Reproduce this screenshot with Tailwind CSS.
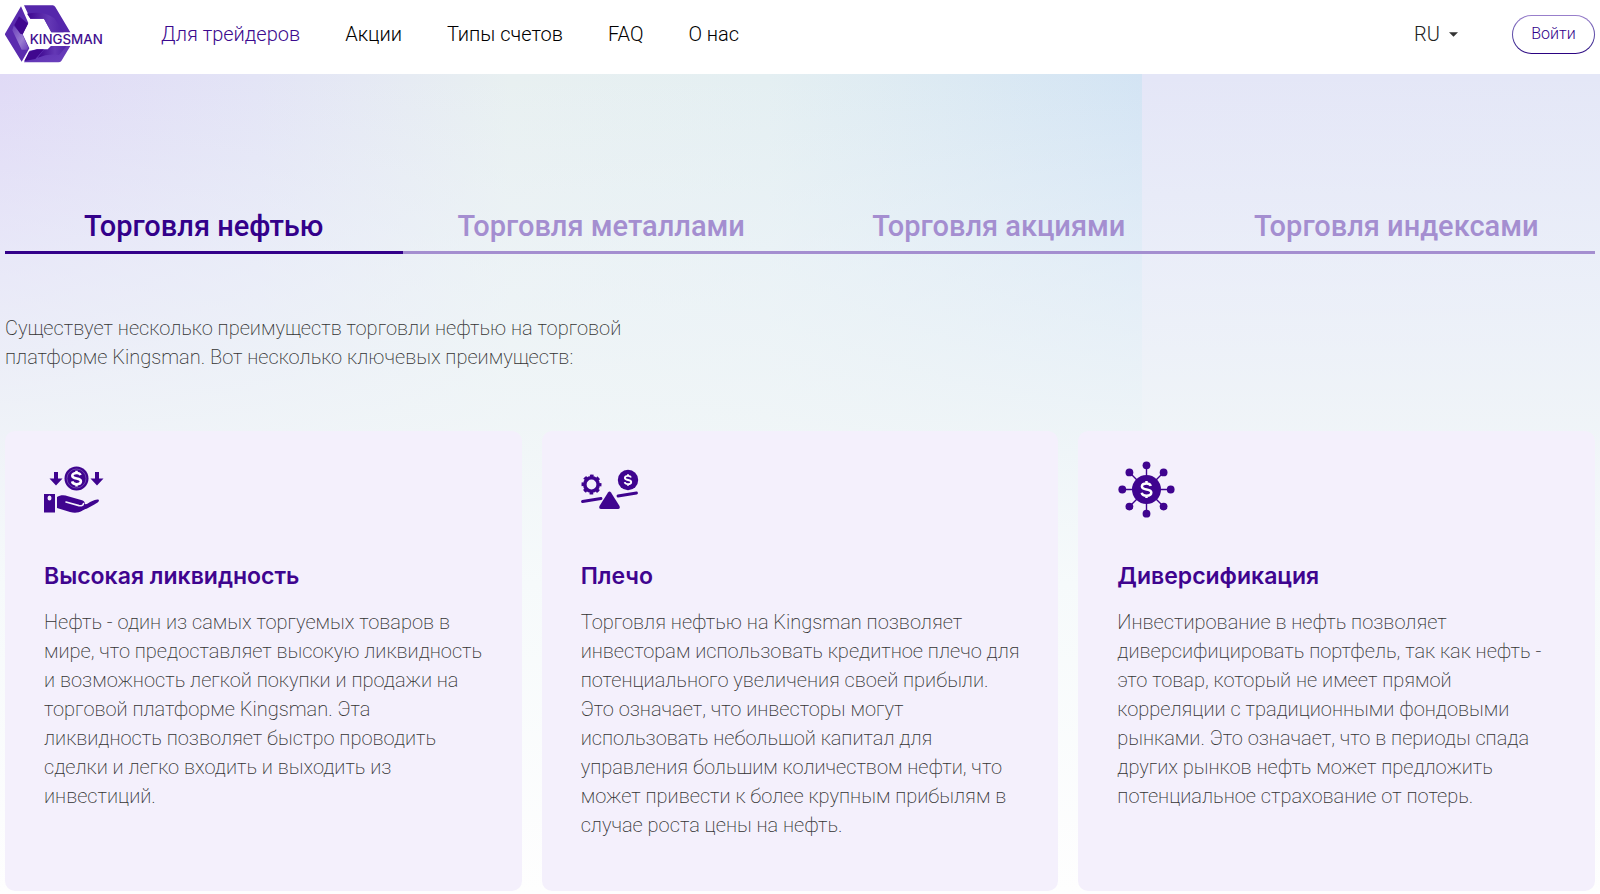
<!DOCTYPE html>
<html lang="ru">
<head>
<meta charset="utf-8">
<meta name="viewport" content="width=device-width, initial-scale=1">
<title>Kingsman</title>
<script src="https://cdn.jsdelivr.net/npm/@tailwindcss/browser@4"></script>
</head>
<body class="flex min-h-screen flex-col bg-white font-['Roboto',sans-serif] text-[#333]">

<header class="flex h-[74px] items-center bg-white px-[5px] pb-[6px]">
  <a href="#" aria-label="Kingsman" class="shrink-0 pt-[2px]">
    <svg class="h-[60px] w-[100px]" viewBox="0 0 300 180">
      <defs>
        <linearGradient id="lg1" x1="0" y1="0" x2="1" y2="1"><stop offset="0" stop-color="#5a2bb0"/><stop offset="1" stop-color="#6c42bd"/></linearGradient>
        <linearGradient id="lg2" x1="0" y1="0" x2="1" y2="0"><stop offset="0" stop-color="#3d068f"/><stop offset=".6" stop-color="#6438b5"/><stop offset="1" stop-color="#4f22a6"/></linearGradient>
        <linearGradient id="lg3" x1="0" y1="0" x2="1" y2="1"><stop offset="0" stop-color="#6a3fba"/><stop offset=".6" stop-color="#9a7dd2"/><stop offset="1" stop-color="#6a3fba"/></linearGradient>
      </defs>
      <path d="M48 4 L-1 88 L50 170 L73 130 L53 88 L70 54Z" fill="#5a2bae"/>
      <path d="M26 62 L22 76 L50 134 L66 134 L70 128 L53 90 L46 84Z" fill="url(#lg3)"/>
      <path d="M42 34 L28 60 L46 86 L53 88 L69 56Z" fill="#40078f"/>
      <path d="M57 1 H143 Q148 1 151 6 L196 82 H139 L117 41 H76Z" fill="#5527ab"/>
      <path d="M76 41 L66 26 Q118 16 148 40 L176 82 H139 L117 41Z" fill="url(#lg2)"/>
      <path d="M96 133 H128 L138 123 H196 L169 168 Q166 172 160 172 H57 L74 137Z" fill="url(#lg1)"/>
      <path d="M72 140 L96 133 H117 L91 162 L58 168Z" fill="#40078f"/>
      <path d="M117 134 H129 L138 124 H184 L162 150 Q132 144 98 158Z" fill="url(#lg2)"/>
      <text x="74" y="117" font-family="Inter, sans-serif" font-size="40" font-weight="500" fill="#42108f">KINGSMAN</text>
    </svg>
  </a>
  <nav class="ml-14 flex flex-1 items-center gap-[45px] text-[20px] leading-6 font-light text-black">
    <a href="#" class="text-[#3c0a8e]">Для трейдеров</a>
    <a href="#">Акции</a>
    <a href="#">Типы счетов</a>
    <a href="#">FAQ</a>
    <a href="#">О нас</a>
  </nav>
  <div class="relative mr-[54px] flex items-center">
    <select aria-label="Язык" class="h-8 w-11 appearance-none bg-transparent text-[20px] leading-8 font-light text-[#222]">
      <option>RU</option><option>EN</option>
    </select>
    <svg class="pointer-events-none absolute right-0 h-[5px] w-[9px]" viewBox="0 0 10 5"><path d="M0 0H10L5 5Z" fill="#333"/></svg>
  </div>
  <button class="h-[39px] w-[83px] rounded-full bg-linear-to-b from-[#9a80cc] to-[#2a0080] p-px text-[16px] font-light">
    <span class="flex h-full items-center justify-center rounded-full bg-white text-[#30008a]">Войти</span>
  </button>
</header>

<main class="flex-1 bg-[linear-gradient(to_bottom,rgba(240,245,250,0)_0%,rgba(240,245,250,0.5)_22%,rgba(241,246,248,0.85)_42%,#f6fafb_62%,#fefefe_100%),linear-gradient(to_right,#e0daf6_0%,#e3e4f6_16%,#e8f0f1_32%,#e4eff2_48%,#d3e4f4_71.4%,#e4e6f7_71.4%,#e4e7f7_100%)] px-[5px] pt-[127px] pb-[3px]">
  <div role="tablist" class="grid grid-cols-4 text-[29px] font-medium leading-[50px] text-[#a48ed0]">
    <button role="tab" aria-selected="true" class="border-b-3 border-[#33008a] text-[#33008a]">Торговля нефтью</button>
    <button role="tab" aria-selected="false" class="border-b-3 border-[#a48ed0]">Торговля металлами</button>
    <button role="tab" aria-selected="false" class="border-b-3 border-[#a48ed0]">Торговля акциями</button>
    <button role="tab" aria-selected="false" class="border-b-3 border-[#a48ed0]">Торговля индексами</button>
  </div>

  <p class="mt-[60px] max-w-[640px] text-[20px] leading-[29px] font-extralight">Существует несколько преимуществ торговли нефтью на торговой платформе Kingsman. Вот несколько ключевых преимуществ:</p>

  <div class="mt-[59px] grid grid-cols-3 gap-5">
    <article class="min-h-[460px] rounded-[10px] bg-[#f4f0fc] pt-[29px] pr-9 pb-10 pl-[39px]">
      <svg class="size-[60px]" viewBox="0 0 60 60" fill="#3f048f">
        <circle cx="32.500" cy="18.500" r="12"/>
        <circle cx="32.500" cy="18.500" r="9.500" fill="none" stroke="#7850b4" stroke-width=".8"/>
        <path d="M36.500 15.200C36 13.700 34.500 13 32.500 13c-2.400 0-4.200 1.100-4.200 2.800 0 4 8.600 1.600 8.600 5.500 0 1.800-1.800 2.900-4.400 2.900-2.200 0-4-1-4.400-2.800M32.500 10.700v3M32.500 23.500v3" fill="none" stroke="#fff" stroke-width="2.600"/>
        <path d="M10 12h4v6.500h4.500L12 25.500 5.500 18.500H10zM51 12h4v6.500h4.500L53 25.500 46.500 18.500H51z"/>
        <path d="M0 34h11v18.500H0z"/><ellipse cx="5.500" cy="38" rx="2" ry="2.500" fill="#f4f0fc"/>
        <path d="M13 37c3-2 7-2.500 11-.8l14 4c2 .7 3 2 2.800 3.800 1 .4 2 0 3-.6 3-2 6-3.400 9.500-4 2-.2 2.200 1.600.7 2.800-5 3.500-10 5.800-15 8-5 2.800-8 3-13 1.800L13 48z"/>
        <path d="M22 42l13 3.600c2 .4 4.500 0 4.500-2" fill="none" stroke="#f4f0fc" stroke-width="1.600" stroke-linecap="round"/>
      </svg>
      <h2 class="mt-9 font-['Inter',sans-serif] text-[23px] leading-[40px] font-semibold text-[#3f048f]">Высокая ликвидность</h2>
      <p class="mt-[12px] text-[20px] leading-[29px] font-extralight">Нефть - один из самых торгуемых товаров в мире, что предоставляет высокую ликвидность и возможность легкой покупки и продажи на торговой платформе Kingsman. Эта ликвидность позволяет быстро проводить сделки и легко входить и выходить из инвестиций.</p>
    </article>
    <article class="min-h-[460px] rounded-[10px] bg-[#f4f0fc] pt-[29px] pr-9 pb-10 pl-[39px]">
      <svg class="size-[60px]" viewBox="0 0 60 60" fill="#3f048f">
        <circle cx="10.500" cy="24.500" r="6.700" fill="none" stroke="#3f048f" stroke-width="3.600"/>
        <circle cx="10.500" cy="24.500" r="8.700" fill="none" stroke="#3f048f" stroke-width="2.600" stroke-dasharray="3.600 3.233" stroke-dashoffset="1.800"/>
        <circle cx="47" cy="20" r="10.200"/>
        <path d="M50 17.500c-.4-1.100-1.500-1.600-3-1.600-1.800 0-3.100.8-3.100 2 0 2.900 6.300 1.200 6.300 4 0 1.400-1.300 2.200-3.200 2.200-1.700 0-3-.7-3.300-2M47 14.200v2M47 23.800v2" fill="none" stroke="#fff" stroke-width="1.900"/>
        <path d="M1.500 41.500L20 38.500M37 36L55.500 33" fill="none" stroke="#3f048f" stroke-width="2.800" stroke-linecap="round"/>
        <path d="M27 32.500q1.500-2 3 0L38.500 46q1 3-1.500 3H20q-2.500 0-1.500-3z"/>
      </svg>
      <h2 class="mt-9 font-['Inter',sans-serif] text-[23px] leading-[40px] font-semibold text-[#3f048f]">Плечо</h2>
      <p class="mt-[12px] text-[20px] leading-[29px] font-extralight">Торговля нефтью на Kingsman позволяет инвесторам использовать кредитное плечо для потенциального увеличения своей прибыли. Это означает, что инвесторы могут использовать небольшой капитал для управления большим количеством нефти, что может привести к более крупным прибылям в случае роста цены на нефть.</p>
    </article>
    <article class="min-h-[460px] rounded-[10px] bg-[#f4f0fc] pt-[29px] pr-9 pb-10 pl-[39px]">
      <svg class="size-[60px]" viewBox="0 0 60 60" fill="#3f048f">
        <path d="M29.500 5v49M5 29.500h49M12 12l35 35M47 12L12 47" fill="none" stroke="#3f048f" stroke-width="1.400"/>
        <circle cx="29.500" cy="29.500" r="14.500"/>
        <circle cx="29.500" cy="5.300" r="3.900"/><circle cx="29.500" cy="53.700" r="3.900"/><circle cx="5.300" cy="29.500" r="3.900"/><circle cx="53.700" cy="29.500" r="3.900"/>
        <circle cx="12.400" cy="12.400" r="3.900"/><circle cx="46.600" cy="12.400" r="3.900"/><circle cx="12.400" cy="46.600" r="3.900"/><circle cx="46.600" cy="46.600" r="3.900"/>
        <path d="M33.800 26c-.5-1.700-2.200-2.500-4.300-2.500-2.600 0-4.600 1.200-4.600 3 0 4.300 9.400 1.800 9.400 6 0 2-2 3.200-4.800 3.200-2.400 0-4.400-1-4.800-3M29.500 21v3M29.500 35v3" fill="none" stroke="#fff" stroke-width="2.500"/>
      </svg>
      <h2 class="mt-9 font-['Inter',sans-serif] text-[23px] leading-[40px] font-semibold text-[#3f048f]">Диверсификация</h2>
      <p class="mt-[12px] text-[20px] leading-[29px] font-extralight">Инвестирование в нефть позволяет диверсифицировать портфель, так как нефть - это товар, который не имеет прямой корреляции с традиционными фондовыми рынками. Это означает, что в периоды спада других рынков нефть может предложить потенциальное страхование от потерь.</p>
    </article>
  </div>
</main>
</body>
</html>
